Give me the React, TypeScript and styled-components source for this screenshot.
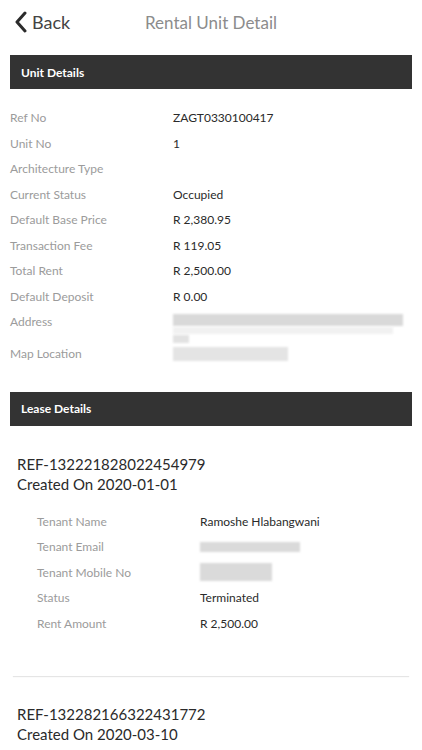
import styled, { createGlobalStyle } from "styled-components";

type Field = { label: string; value?: string; blur?: number[] };

const unitFields: Field[] = [
  { label: "Ref No", value: "ZAGT0330100417" },
  { label: "Unit No", value: "1" },
  { label: "Architecture Type", value: "" },
  { label: "Current Status", value: "Occupied" },
  { label: "Default Base Price", value: "R 2,380.95" },
  { label: "Transaction Fee", value: "R 119.05" },
  { label: "Total Rent", value: "R 2,500.00" },
  { label: "Default Deposit", value: "R 0.00" },
];

const leases = [
  {
    ref: "REF-132221828022454979",
    created: "2020-01-01",
    fields: [
      { label: "Tenant Name", value: "Ramoshe Hlabangwani" },
      { label: "Tenant Email", blur: [100] },
      { label: "Tenant Mobile No", blur: [72] },
      { label: "Status", value: "Terminated" },
      { label: "Rent Amount", value: "R 2,500.00" },
    ] as Field[],
  },
  {
    ref: "REF-132282166322431772",
    created: "2020-03-10",
    fields: [] as Field[],
  },
];

const App = () => {
  return (
    <Page>
      <GlobalStyle />
      <Header>
        <BackButton>
          <svg width="14" height="22" viewBox="0 0 14 22">
            <polyline points="11,2 3,11 11,20" fill="none" stroke="#2b2b2b" strokeWidth="3" strokeLinecap="round" strokeLinejoin="round" />
          </svg>
          Back
        </BackButton>
        <Title>Rental Unit Detail</Title>
        <span />
      </Header>

      <SectionBar>Unit Details</SectionBar>
      <UnitList>
        {unitFields.map((f) => (
          <Row key={f.label}>
            <Label>{f.label}</Label>
            <Value>{f.value}</Value>
          </Row>
        ))}
        <Row $tall>
          <Label>Address</Label>
          <BlurStack>
            <Blur $w={230} $h={12} $tone="#d9d9d9" />
            <Blur $w={220} $h={7} $tone="#f1f1f1" />
            <Blur $w={16} $h={8} $tone="#e2e2e2" />
          </BlurStack>
        </Row>
        <Row>
          <Label>Map Location</Label>
          <Blur $w={115} $h={14} $tone="#e4e4e4" />
        </Row>
      </UnitList>

      <SectionBar>Lease Details</SectionBar>
      {leases.map((l) => (
        <LeaseCard key={l.ref} $last={l.fields.length === 0}>
          <LeaseRef>{l.ref}</LeaseRef>
          <LeaseRef>Created On {l.created}</LeaseRef>
          {l.fields.length > 0 && (
            <LeaseList>
              {l.fields.map((f) => (
                <LeaseRow key={f.label}>
                  <Label>{f.label}</Label>
                  {f.blur ? (
                    <Blur $w={f.blur[0]} $h={f.blur[0] > 80 ? 10 : 18} $tone="#dadada" />
                  ) : (
                    <Value>{f.value}</Value>
                  )}
                </LeaseRow>
              ))}
            </LeaseList>
          )}
        </LeaseCard>
      ))}
    </Page>
  );
};

export default App;

const GlobalStyle = createGlobalStyle`
  body {
    margin: 0;
    background: #ffffff;
    font-family: Lato, "Noto Sans", sans-serif;
  }
`;

const Page = styled.div`
  width: 422px;
  background: #ffffff;
  overflow: hidden;
`;

const Header = styled.div`
  height: 44px;
  display: grid;
  grid-template-columns: 1fr auto 1fr;
  align-items: center;
  padding: 0 14px;
  margin-bottom: 11px;
`;

const BackButton = styled.div`
  display: flex;
  align-items: center;
  gap: 4px;
  font-size: 18px;
  color: #444444;
`;

const Title = styled.div`
  font-size: 17px;
  color: #8c8c8c;
  text-align: center;
`;

const SectionBar = styled.div`
  margin: 0 10px;
  height: 34px;
  background: #333333;
  color: #ffffff;
  font-weight: 700;
  font-size: 12px;
  display: flex;
  align-items: center;
  padding-left: 11px;
`;

const UnitList = styled.div`
  padding: 16px 10px 25px;
`;

const Row = styled.div<{ $tall?: boolean }>`
  display: grid;
  grid-template-columns: 163px 1fr;
  align-items: ${(p) => (p.$tall ? "start" : "center")};
  height: ${(p) => (p.$tall ? "32px" : "25.5px")};
  padding-top: ${(p) => (p.$tall ? "5px" : "0")};
  box-sizing: border-box;
`;

const Label = styled.div`
  font-size: 12px;
  color: #9b9b9b;
`;

const Value = styled.div`
  font-size: 12px;
  color: #2a2a2a;
`;

const BlurStack = styled.div`
  display: flex;
  flex-direction: column;
  gap: 1px;
`;

const Blur = styled.div<{ $w: number; $h: number; $tone: string }>`
  width: ${(p) => p.$w}px;
  height: ${(p) => p.$h}px;
  background: ${(p) => p.$tone};
  filter: blur(1px);
`;

const LeaseCard = styled.div<{ $last?: boolean }>`
  margin: 0 12px;
  padding: ${(p) => (p.$last ? "26px 5px 20px" : "28px 5px 40px")};
  background: #ffffff;
  box-shadow: ${(p) => (p.$last ? "none" : "0 2px 1px -1px rgba(0, 0, 0, 0.1)")};
  margin-bottom: ${(p) => (p.$last ? "0" : "2px")};
`;

const LeaseRef = styled.div`
  font-size: 15px;
  line-height: 20px;
  color: #2a2a2a;
`;

const LeaseList = styled.div`
  padding: 15px 0 0 20px;
`;

const LeaseRow = styled.div`
  display: grid;
  grid-template-columns: 163px 1fr;
  align-items: center;
  height: 25.5px;
`;
